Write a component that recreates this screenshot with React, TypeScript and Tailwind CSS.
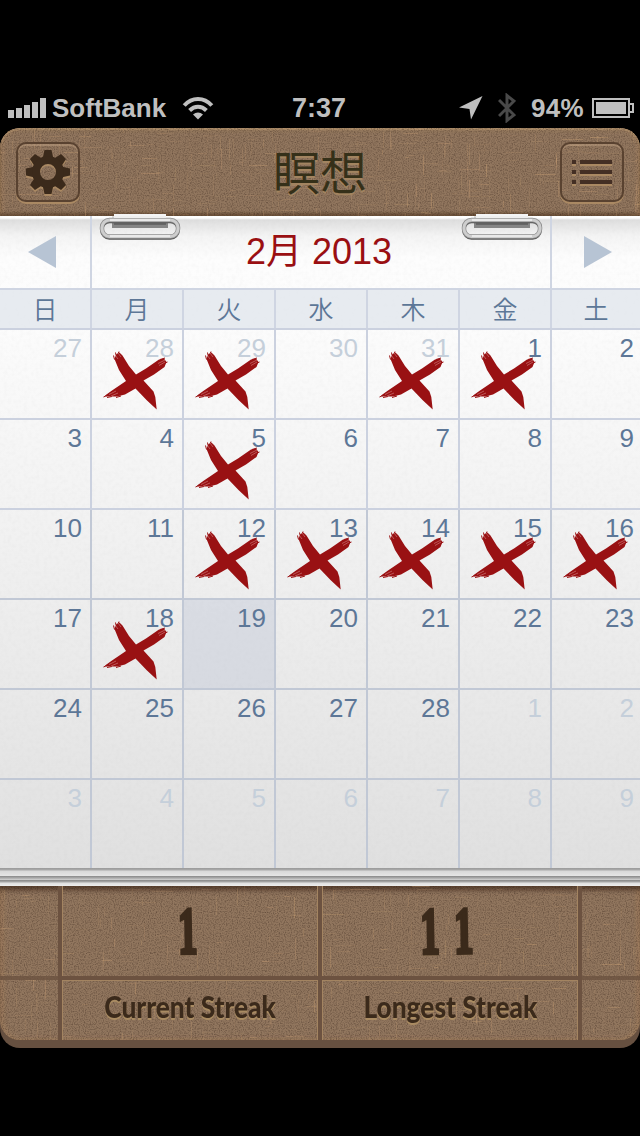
import type { ReactNode } from "react";
import { clsx } from "clsx";

const weekdays = ["日", "月", "火", "水", "木", "金", "土"];
const days = [
  27, 28, 29, 30, 31, 1, 2, 3, 4, 5, 6, 7, 8, 9, 10, 11, 12, 13, 14, 15, 16, 17, 18, 19, 20, 21,
  22, 23, 24, 25, 26, 27, 28, 1, 2, 3, 4, 5, 6, 7, 8, 9,
];
const marked = [1, 2, 4, 5, 9, 16, 17, 18, 19, 20, 22];
const today = 23;

// Fixed pseudo random sequence so the threads stay put between renders
function threads(height: number, seed: number) {
  let s = seed * 7919;
  const next = () => {
    s = (s * 16807) % 2147483647;
    return s / 2147483647;
  };
  return Array.from({ length: 420 }, (_, i) => ({
    x: Math.round(next() * 640),
    y: Math.round(next() * height),
    length: 4 + next() * 18,
    vertical: i % 2 === 0,
    opacity: 0.05 + next() * next() * 0.35,
  }));
}

function Linen({ id, height, seed }: { id: string; height: number; seed: number }) {
  return (
    <svg className="pointer-events-none absolute inset-0 h-full w-full rounded-[inherit]" aria-hidden="true">
      <filter id={id} x="0" y="0" width="100%" height="100%" colorInterpolationFilters="sRGB">
        <feTurbulence type="fractalNoise" baseFrequency="0.83" numOctaves="2" seed={seed} />
        <feColorMatrix values="0 0 0 0 .2  0 0 0 0 .13  0 0 0 0 .09  .9 0 0 0 -.37" />
      </filter>
      <rect width="100%" height="100%" filter={`url(#${id})`} />
      {threads(height, seed).map((t, i) => (
        <rect
          key={i}
          x={t.x}
          y={t.y}
          width={t.vertical ? 1 : t.length}
          height={t.vertical ? t.length : 1}
          fill="#d0a578"
          opacity={t.opacity}
        />
      ))}
    </svg>
  );
}

function PaperGrain() {
  return (
    <svg className="pointer-events-none absolute inset-0 h-full w-full" aria-hidden="true">
      <filter id="paper" x="0" y="0" width="100%" height="100%">
        <feTurbulence type="fractalNoise" baseFrequency="0.25" numOctaves="3" seed="4" />
        <feColorMatrix values="0 0 0 0 .3  0 0 0 0 .3  0 0 0 0 .3  .09 0 0 0 -.035" />
      </filter>
      <rect width="100%" height="100%" filter="url(#paper)" />
    </svg>
  );
}

function StatusBar() {
  return (
    <div className="flex h-10 items-center bg-black pl-2 text-[26px] font-bold leading-10 text-[#bfbfbf]">
      <svg className="h-5 w-[38px] shrink-0" viewBox="0 0 38 20" fill="currentColor">
        <path d="M0 12h6v8H0zM8 10h6v10H8zM16 7h6v13h-6zM24 4h6v16h-6zM32 0h6v20h-6z" />
      </svg>
      <span className="ml-[6px] w-[114px]">SoftBank</span>
      <svg className="ml-4 h-[24px] w-8 shrink-0" viewBox="0 0 32 24" fill="none" stroke="currentColor" strokeWidth="4">
        <path d="M2.2 9.5C10 .7 22 .7 29.8 9.5M7.6 14.5c5-5 11.8-5 16.8 0" />
        <path d="M16 23.500l-5-5c3-2.700 7-2.700 10 0z" fill="currentColor" stroke="none" />
      </svg>
      <span className="ml-[78px] w-[56px] whitespace-nowrap text-[27px]">7:37</span>
      <svg className="ml-[111px] h-6 w-6 shrink-0" viewBox="0 0 24 24" fill="currentColor">
        <path d="M23.500 0L12 23.500 10.500 13 0 11.500z" />
      </svg>
      <svg className="ml-[15px] h-[30px] w-[18px] shrink-0" viewBox="0 0 18 30" fill="none" stroke="#494949" strokeWidth="3">
        <path d="M1 7l15 15-7 5.500V2.500L16 8 1 23" />
      </svg>
      <span className="ml-[15px] w-[61px] tracking-[0.3px]">94%</span>
      <svg className="h-5 w-[42px] shrink-0" viewBox="0 0 42 20" fill="none" stroke="currentColor" strokeWidth="2">
        <path d="M1 1h36v18H1zM37 6h4v8h-4" />
        <path d="M4 4h30v12H4z" fill="currentColor" stroke="none" />
      </svg>
    </div>
  );
}

function HeaderButton({ children, label }: { children: ReactNode; label: string }) {
  return (
    <button
      aria-label={label}
      className="flex h-[60px] w-16 items-center justify-center rounded-[10px] border-2 border-[#594230] shadow-[0_2px_0_#aa8963,inset_0_2px_0_rgba(190,160,130,.5)]"
    >
      {children}
    </button>
  );
}

function Header() {
  return (
    <header className="relative h-[88px] rounded-t-[20px] bg-[#91765e] shadow-[inset_0_2px_1px_#ab8c69,inset_0_-3px_3px_rgba(60,35,20,.5),inset_3px_0_4px_rgba(185,145,105,.45),inset_-3px_0_4px_rgba(185,145,105,.45)]">
      <Linen id="linen-top" height={88} seed={17} />
      <div className="relative flex justify-between px-4 pt-[14px]">
        <HeaderButton label="Settings">
          <svg className="h-12 w-12 drop-shadow-[0_2px_0_#aa8963]" viewBox="-24 -24 48 48" fill="#3b2a1b">
            {[0, 45, 90, 135, 180, 225, 270, 315].map((angle) => (
              <path key={angle} d="M-3.500-22h7l2 9h-11z" transform={`rotate(${angle})`} />
            ))}
            <circle r="12" fill="none" stroke="#3b2a1b" strokeWidth="8" />
          </svg>
        </HeaderButton>
        <h1 className="font-['Noto_Sans_CJK_JP',sans-serif] text-[47px] font-normal leading-[56px] text-[#353019] [text-shadow:0_2px_0_#a28460]">
          瞑想
        </h1>
        <HeaderButton label="List">
          <svg className="mt-[2px] h-[26px] w-10" viewBox="0 0 40 26">
            <path d="M0 4h4v2H0zM8 4h32v2H8zM0 14h4v2H0zM8 14h32v2H8zM0 24h4v2H0zM8 24h32v2H8z" fill="#aa8963" />
            <path d="M0 0h4v4H0zM8 0h32v4H8zM0 10h4v4H0zM8 10h32v4H8zM0 20h4v4H0zM8 20h32v4H8z" fill="#442f24" />
          </svg>
        </HeaderButton>
      </div>
    </header>
  );
}

function Clip({ className }: { className: string }) {
  return (
    <svg className={clsx("absolute -top-[2px] h-7 w-[84px]", className)} viewBox="0 0 84 28">
      <path d="M16 0h52v2H16z" fill="#f4f4f4" />
      <path d="M14 2h54v3H14z" fill="#dedede" />
      <path d="M14 8h56v6H14z" fill="#858585" />
      <path d="M16 8h52v3H16z" fill="#666" />
      <rect x="4" y="7.500" width="76" height="16.500" rx="7.500" fill="none" stroke="#555" strokeWidth="3.500" />
      <rect x="4" y="6" width="76" height="16.500" rx="7.500" fill="none" stroke="#8e8e8e" strokeWidth="4.500" />
      <rect x="4" y="6" width="76" height="16.500" rx="7.500" fill="none" stroke="#cecece" strokeWidth="3" />
      <path d="M12 6h60M12 22h60" stroke="#e9e9e9" strokeWidth="2" />
      <path d="M16 2h52v2H16z" fill="#efefef" />
    </svg>
  );
}

function Cross() {
  return (
    <svg className="absolute left-2 top-[15px] h-[70px] w-[70px]" viewBox="0 0 70 70" aria-hidden="true">
      <path
        d="M14.5 14L16 9.5 19.5 7.500 22.500 10.500 29 21 36 29.500 46 23.500 59 14.500 64 13.500 66.500 17 64.500 22 54 29.500 43.500 35.500 53.500 46.500 55.300 52 56.700 64.500 46.500 55 35.500 43.500 25 49.500 17 51.500 6 51.500 5 50.500 12 45.500 26 36 19 25z"
        fill="#991113"
      />
      <path
        d="M14.500 14.500l-1-4M16 10l-.5-2.500M18 9l1-2.500M60 14.500l5-1.500M65 18l2.500-1M8 50l-4.500 2M12 51.500l-5 1M21 51l-5 1.500"
        stroke="#991113"
        fill="none"
      />
      <path d="M15 10l3 4M18 8l3 4M58 18.500l7-3.500M59 20.500l6-3.500M9 49.500l7-3.500M11 51l7-3" fill="none" stroke="#df9a9a" strokeWidth=".5" />
    </svg>
  );
}

function Calendar() {
  return (
    <main className="relative h-[652px] bg-[linear-gradient(#fff_0,#fff_2px,#dedede_4px,#f4f4f4_20px,#fdfdfd_42px,#fcfcfc_110px,#e0e0e0_100%)]">
      <PaperGrain />
      <div className="relative flex h-[74px] border-b-2 border-[#cfd5e2]">
        <button aria-label="Previous month" className="w-[92px] border-r-2 border-[#cfd5e2] pl-7">
          <svg className="h-8 w-7" viewBox="0 0 28 32" fill="#b7c4d4">
            <path d="M28 0v32L0 16z" />
          </svg>
        </button>
        <h2 className="w-[460px] border-r-2 border-[#cfd5e2] pr-1 text-center font-['Liberation_Sans','Noto_Sans_CJK_JP',sans-serif] text-[36px] font-normal leading-[71px] text-[#9a0f12]">
          2月 2013
        </h2>
        <button aria-label="Next month" className="w-[88px] pl-8">
          <svg className="h-8 w-7" viewBox="0 0 28 32" fill="#b7c4d4">
            <path d="M0 0v32l28-16z" />
          </svg>
        </button>
      </div>
      <div className="relative grid h-10 grid-cols-[repeat(6,92px)_88px] border-b-2 border-[#cbd1df] bg-[#e3e7ed]/85">
        {weekdays.map((day, i) => (
          <span
            key={day}
            className={clsx(
              "text-center font-['Noto_Sans_CJK_JP',sans-serif] text-[25px] font-[350] leading-[36px] text-[#5d7797]",
              i < 6 && "border-r-2 border-[#cfd5e2]",
            )}
          >
            {day}
          </span>
        ))}
      </div>
      <div className="relative grid grid-cols-[repeat(6,92px)_88px] grid-rows-[repeat(5,90px)_88px]">
        {days.map((day, i) => (
          <div
            key={i}
            className={clsx(
              "relative text-right text-[26px] leading-[36px]",
              i % 7 < 6 ? "border-r-2 pr-2" : "pr-[6px]",
              i < 35 && "border-b-2",
              i < 14 ? "border-[#cbd1df]" : "border-[#c1c8d5]",
              i < 5 || i > 32 ? "text-[#c5cfda]" : "text-[#5d7797]",
              i === today && "bg-[#bcc3d4]/40",
            )}
          >
            {marked.includes(i) && <Cross />}
            <span className="relative">{day}</span>
          </div>
        ))}
      </div>
      <Clip className="left-[98px]" />
      <Clip className="left-[460px]" />
    </main>
  );
}

function Streak({ value, label }: { value: string; label: string }) {
  return (
    <section className="border-r-4 border-[#6c5240] text-center text-[#3b2a1b] shadow-[inset_1px_0_0_#a38461,inset_-1px_0_0_#a38461]">
      <div className="h-[90px] pt-[8px]">
        <span className="mr-[-11px] inline-block -rotate-1 scale-x-[.58] font-['Liberation_Serif',serif] text-[66px] font-bold leading-[74px] tracking-[29px] [-webkit-text-stroke:4px_#3b2a1b] [text-shadow:0_2px_0_#b29468]">
          {value}
        </span>
      </div>
      <div className="h-16 border-t-4 border-[#6c5240] shadow-[inset_0_1px_0_#a38461]">
        <span className="-mx-8 inline-block scale-x-[.875] whitespace-nowrap font-['Lato',sans-serif] text-[30px] font-black leading-[53px] [text-shadow:0_2px_0_#a98b62]">
          {label}
        </span>
      </div>
    </section>
  );
}

function Footer() {
  return (
    <footer className="relative h-[162px] overflow-hidden rounded-b-[20px] bg-[#665040]">
      <div className="relative h-[154px] overflow-hidden rounded-b-[20px] bg-[#91765e] shadow-[inset_0_6px_5px_-2px_rgba(50,30,20,.65),inset_4px_0_4px_rgba(175,135,95,.4),inset_-4px_0_4px_rgba(175,135,95,.4)]">
        <Linen id="linen-bottom" height={154} seed={41} />
        <div className="relative grid h-full grid-cols-[62px_260px_260px_58px]">
          <div className="border-r-4 border-[#6c5240]">
            <div className="mt-[90px] h-1 bg-[#6c5240]/80" />
          </div>
          <Streak value="1" label="Current Streak" />
          <Streak value="11" label="Longest Streak" />
          <div>
            <div className="mt-[90px] h-1 bg-[#6c5240]/80" />
          </div>
        </div>
      </div>
    </footer>
  );
}

export default function App() {
  return (
    <div className="h-[1136px] w-[640px] overflow-hidden bg-black pt-[88px] font-['Liberation_Sans',Arial,sans-serif]">
      <StatusBar />
      <Header />
      <Calendar />
      <div className="h-[18px] bg-[linear-gradient(#999_0,#aaa_2px,#d8d8d8_3px,#e5e5e5_8px,#888_8px,#aaa_10px,#d4d4d4_12px,#858585_12px,#aaa_14px,#dedede_15px,#eee_18px)]" />
      <Footer />
    </div>
  );
}
